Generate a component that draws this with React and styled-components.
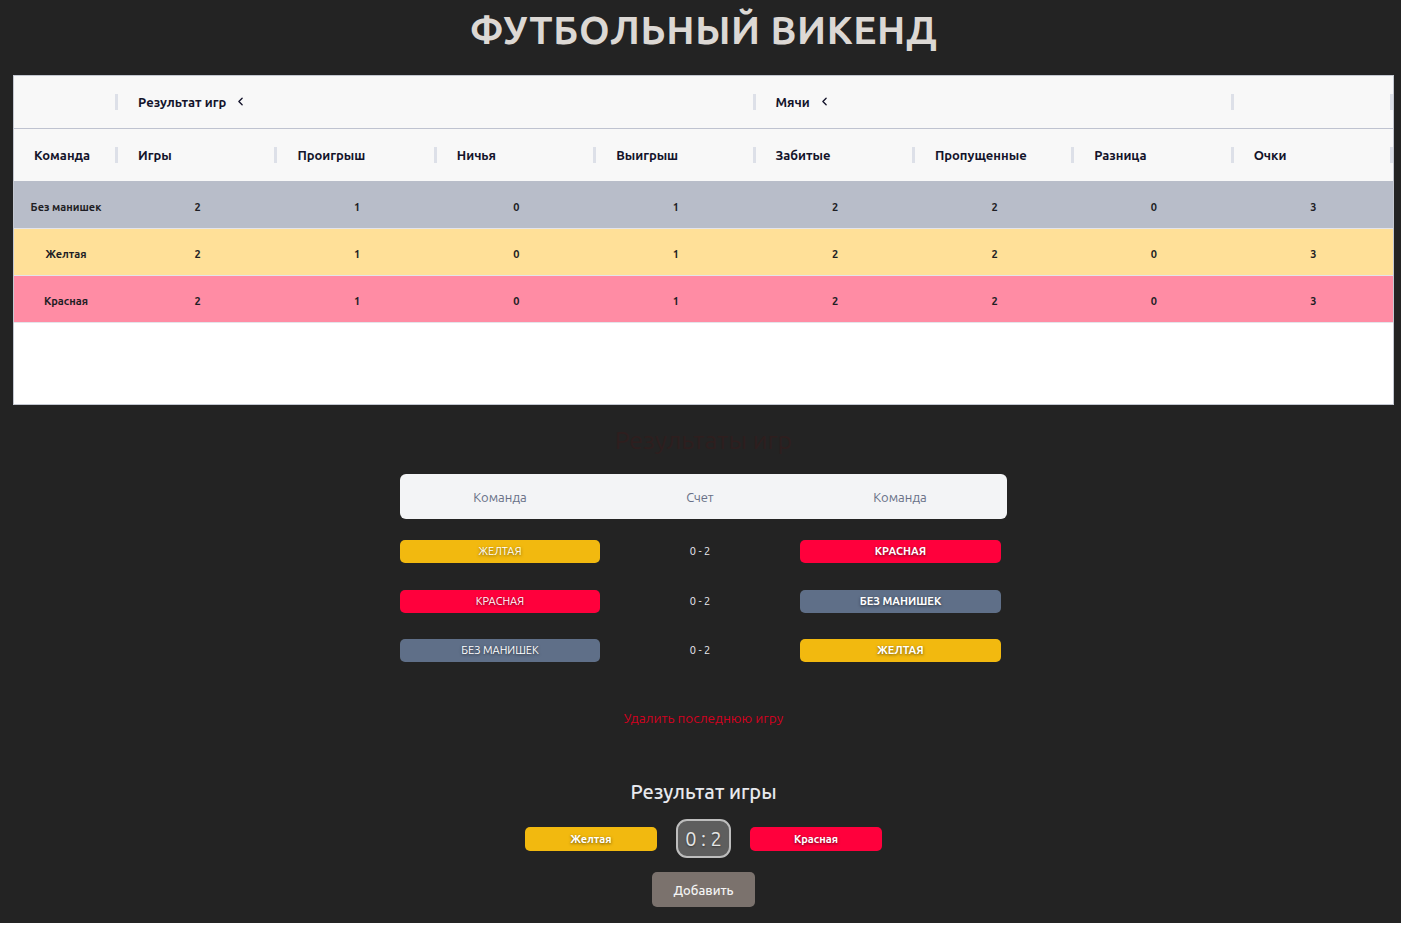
import React from "react";
import styled, { createGlobalStyle } from "styled-components";
import { ChevronLeft } from "lucide-react";

const teams = {
  none: { name: "Без манишек", row: "#b8bdc9", badge: "#5f6f88" },
  yellow: { name: "Желтая", row: "#ffe098", badge: "#f2b90f" },
  red: { name: "Красная", row: "#ff8ca4", badge: "#ff003c" },
};

const standings = [
  { team: "none", values: [2, 1, 0, 1, 2, 2, 0, 3] },
  { team: "yellow", values: [2, 1, 0, 1, 2, 2, 0, 3] },
  { team: "red", values: [2, 1, 0, 1, 2, 2, 0, 3] },
];

const columns = [
  "Команда",
  "Игры",
  "Проигрыш",
  "Ничья",
  "Выигрыш",
  "Забитые",
  "Пропущенные",
  "Разница",
  "Очки",
];

const games = [
  { home: "yellow", away: "red", score: "0 - 2" },
  { home: "red", away: "none", score: "0 - 2" },
  { home: "none", away: "yellow", score: "0 - 2" },
];

const GlobalStyle = createGlobalStyle`
  body {
    margin: 0;
    background: #ffffff;
    font-family: "Ubuntu", "Noto Sans", sans-serif;
  }
`;

const Page = styled.div`
  background: #232323;
  padding: 0 7px 16px 13px;
`;

const Title = styled.h1`
  margin: 0;
  height: 75px;
  line-height: 60px;
  text-align: center;
  font-size: 39px;
  font-weight: 700;
  letter-spacing: 0.6px;
  color: #dcd8d4;
`;

const TableBox = styled.div`
  height: 330px;
  box-sizing: border-box;
  background: #ffffff;
  border: 1px solid #c3c7d0;
`;

const Table = styled.table`
  width: 100%;
  table-layout: fixed;
  border-collapse: collapse;
`;

const HeadRow = styled.tr`
  height: 52px;
  background: #f8f8f8;
  border-bottom: 1px solid #bfc3d0;

  &:last-child {
    height: 53px;
    border-bottom: none;
  }
`;

const Th = styled.th`
  position: relative;
  padding: 0 20px;
  text-align: left;
  font-size: 13px;
  font-weight: 700;
  color: #14142b;
  white-space: nowrap;

  &::after {
    content: "";
    position: absolute;
    right: 0;
    top: 50%;
    width: 3px;
    height: 16px;
    transform: translateY(-50%);
    background: #dde0e8;
  }
`;

const HeadLabel = styled.span`
  display: inline-flex;
  align-items: center;
  gap: 8px;
`;

const BodyRow = styled.tr`
  height: 47px;
  background: ${(p) => p.$bg};
  border-bottom: 1px solid #e4e4ea;
`;

const Td = styled.td`
  padding: 5px 0 0;
  text-align: center;
  font-size: 11px;
  font-weight: 600;
  color: #1e1e24;
`;

const SectionTitle = styled.h2`
  margin: 20px 0 19px;
  line-height: 30px;
  text-align: center;
  font-size: 25px;
  font-weight: 400;
  color: #2e1e1e;
`;

const Results = styled.div`
  width: 607px;
  margin: 0 auto;
`;

const ResultsHead = styled.div`
  display: grid;
  grid-template-columns: 200px 200px 200px;
  align-items: center;
  height: 45px;
  background: #f3f4f6;
  border-radius: 6px;
  font-size: 13px;
  color: #687086;
  text-align: center;
`;

const GameList = styled.div`
  display: flex;
  flex-direction: column;
  gap: 26.5px;
  padding-top: 21px;
`;

const GameRow = styled.div`
  display: grid;
  grid-template-columns: 200px 200px 201px;
  align-items: center;
`;

const Badge = styled.div`
  height: 23px;
  line-height: 23px;
  border-radius: 5px;
  background: ${(p) => p.$bg};
  color: #ffffff;
  text-align: center;
  text-transform: uppercase;
  font-size: 11px;
  font-weight: ${(p) => (p.$bold ? 700 : 400)};
  text-shadow: 0 1px 3px rgba(0, 0, 0, 0.55);
`;

const Score = styled.div`
  text-align: center;
  font-size: 11px;
  line-height: 21px;
  color: #ececf0;
`;

const DeleteLink = styled.div`
  margin-top: 47px;
  line-height: 18px;
  text-align: center;
  font-size: 13.5px;
  color: #d3001f;
  cursor: pointer;
`;

const AddTitle = styled.h3`
  margin: 53px 0 0;
  line-height: 24px;
  text-align: center;
  font-size: 20px;
  font-weight: 500;
  color: #e8e9ee;
`;

const Controls = styled.div`
  display: flex;
  justify-content: center;
  align-items: center;
  gap: 19px;
  margin-top: 15px;
`;

const TeamButton = styled.div`
  width: 132px;
  height: 24px;
  line-height: 24px;
  border-radius: 5px;
  background: ${(p) => p.$bg};
  color: #ffffff;
  text-align: center;
  font-size: 11px;
  font-weight: 700;
  text-shadow: 0 1px 3px rgba(0, 0, 0, 0.55);
`;

const ScoreBox = styled.div`
  width: 55px;
  height: 39px;
  box-sizing: border-box;
  display: flex;
  align-items: center;
  justify-content: center;
  border: 2px solid #bdbdbd;
  border-radius: 11px;
  background: #5e5e5e;
  color: #e4e4e4;
  font-size: 20px;
  text-shadow: 0 1px 2px rgba(0, 0, 0, 0.4);
`;

const AddButton = styled.button`
  display: block;
  width: 103px;
  height: 35px;
  margin: 14px auto 0;
  border: none;
  border-radius: 5px;
  background: #7b726d;
  color: #f4f4f4;
  font-family: inherit;
  font-size: 13px;
  font-weight: 500;
  cursor: pointer;
`;

export default function App() {
  return (
    <>
      <GlobalStyle />
      <Page>
        <Title>ФУТБОЛЬНЫЙ ВИКЕНД</Title>

        <TableBox>
          <Table>
            <colgroup>
              <col style={{ width: 104 }} />
              {columns.slice(1).map((c) => (
                <col key={c} />
              ))}
            </colgroup>
            <thead>
              <HeadRow>
                <Th />
                <Th colSpan={4}>
                  <HeadLabel>
                    Результат игр <ChevronLeft size={13} strokeWidth={2.5} />
                  </HeadLabel>
                </Th>
                <Th colSpan={3}>
                  <HeadLabel>
                    Мячи <ChevronLeft size={13} strokeWidth={2.5} />
                  </HeadLabel>
                </Th>
                <Th />
              </HeadRow>
              <HeadRow>
                {columns.map((c) => (
                  <Th key={c}>{c}</Th>
                ))}
              </HeadRow>
            </thead>
            <tbody>
              {standings.map((s) => (
                <BodyRow key={s.team} $bg={teams[s.team].row}>
                  <Td>{teams[s.team].name}</Td>
                  {s.values.map((v, i) => (
                    <Td key={i}>{v}</Td>
                  ))}
                </BodyRow>
              ))}
            </tbody>
          </Table>
        </TableBox>

        <SectionTitle>Результаты игр</SectionTitle>

        <Results>
          <ResultsHead>
            <span>Команда</span>
            <span>Счет</span>
            <span>Команда</span>
          </ResultsHead>
          <GameList>
            {games.map((g, i) => (
              <GameRow key={i}>
                <Badge $bg={teams[g.home].badge}>{teams[g.home].name}</Badge>
                <Score>{g.score}</Score>
                <Badge $bg={teams[g.away].badge} $bold>
                  {teams[g.away].name}
                </Badge>
              </GameRow>
            ))}
          </GameList>
        </Results>

        <DeleteLink>Удалить последнюю игру</DeleteLink>

        <AddTitle>Результат игры</AddTitle>
        <Controls>
          <TeamButton $bg={teams.yellow.badge}>Желтая</TeamButton>
          <ScoreBox>0 : 2</ScoreBox>
          <TeamButton $bg={teams.red.badge}>Красная</TeamButton>
        </Controls>
        <AddButton>Добавить</AddButton>
      </Page>
    </>
  );
}
